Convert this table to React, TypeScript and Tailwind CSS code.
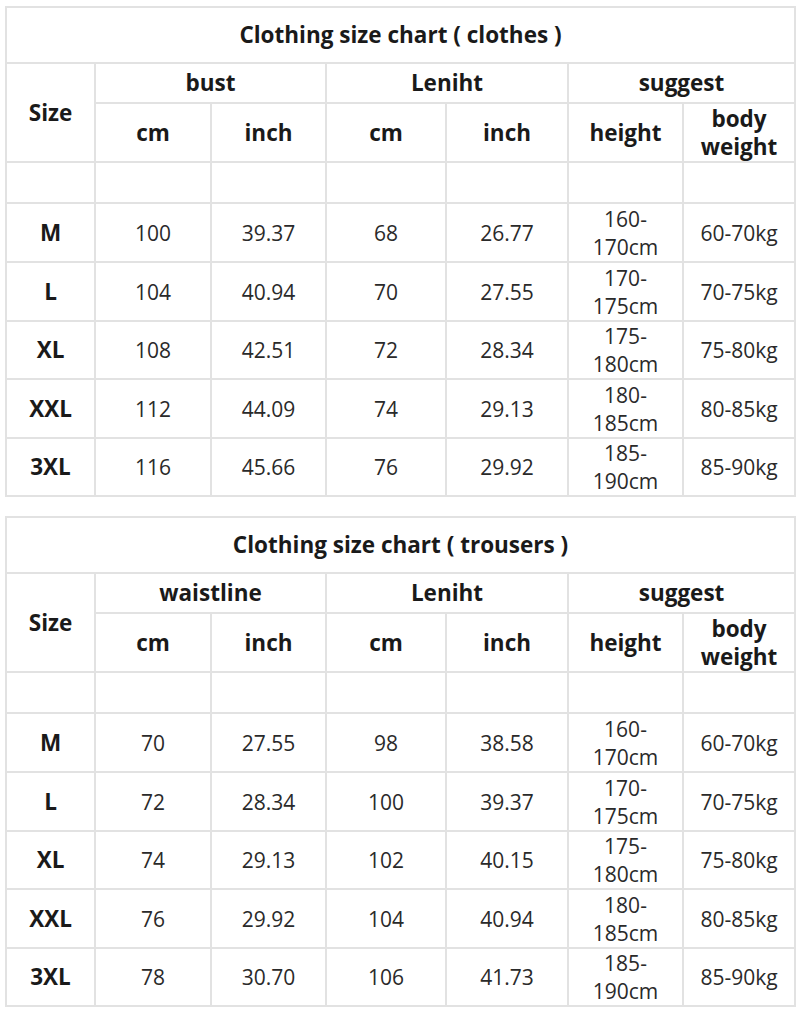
import React from 'react';

type Row = [string, string, string, string, string, string, string];

const clothes: Row[] = [
  ['M', '100', '39.37', '68', '26.77', '160-170cm', '60-70kg'],
  ['L', '104', '40.94', '70', '27.55', '170-175cm', '70-75kg'],
  ['XL', '108', '42.51', '72', '28.34', '175-180cm', '75-80kg'],
  ['XXL', '112', '44.09', '74', '29.13', '180-185cm', '80-85kg'],
  ['3XL', '116', '45.66', '76', '29.92', '185-190cm', '85-90kg'],
];

const trousers: Row[] = [
  ['M', '70', '27.55', '98', '38.58', '160-170cm', '60-70kg'],
  ['L', '72', '28.34', '100', '39.37', '170-175cm', '70-75kg'],
  ['XL', '74', '29.13', '102', '40.15', '175-180cm', '75-80kg'],
  ['XXL', '76', '29.92', '104', '40.94', '180-185cm', '80-85kg'],
  ['3XL', '78', '30.70', '106', '41.73', '185-190cm', '85-90kg'],
];

const rowHeights = ['h-[59px]', 'h-[59px]', 'h-[58px]', 'h-[59px]', 'h-[58px]'];

const cell = 'border-2 border-[#e2e2e2] text-center align-middle p-0';
const bold = 'font-bold text-[#1a1a1a] text-[22.5px]';

const SizeTable = ({ title, first, rows }: { title: string; first: string; rows: Row[] }) => (
  <table className="table-fixed border-collapse w-[789px] text-[21px] leading-[28px] text-[#2a2a2a]">
    <colgroup>
      <col className="w-[89px]" />
      <col className="w-[116px]" />
      <col className="w-[115px]" />
      <col className="w-[120px]" />
      <col className="w-[122px]" />
      <col className="w-[115px]" />
      <col className="w-[112px]" />
    </colgroup>
    <tbody>
      <tr className="h-[56px]">
        <td colSpan={7} className={`${cell} font-bold text-[#1a1a1a] text-[22.5px]`}>{title}</td>
      </tr>
      <tr className="h-[40px]">
        <td rowSpan={2} className={`${cell} ${bold}`}>Size</td>
        <td colSpan={2} className={`${cell} ${bold}`}>{first}</td>
        <td colSpan={2} className={`${cell} ${bold}`}>Leniht</td>
        <td colSpan={2} className={`${cell} ${bold}`}>suggest</td>
      </tr>
      <tr className="h-[59px]">
        <td className={`${cell} ${bold}`}>cm</td>
        <td className={`${cell} ${bold}`}>inch</td>
        <td className={`${cell} ${bold}`}>cm</td>
        <td className={`${cell} ${bold}`}>inch</td>
        <td className={`${cell} ${bold}`}>height</td>
        <td className={`${cell} ${bold}`}>body<br />weight</td>
      </tr>
      <tr className="h-[41px]">
        {Array.from({ length: 7 }).map((_, i) => (
          <td key={i} className={cell}></td>
        ))}
      </tr>
      {rows.map((r, i) => (
        <tr key={r[0]} className={rowHeights[i]}>
          <td className={`${cell} ${bold}`}>{r[0]}</td>
          <td className={cell}>{r[1]}</td>
          <td className={cell}>{r[2]}</td>
          <td className={cell}>{r[3]}</td>
          <td className={cell}>{r[4]}</td>
          <td className={cell}>
            {r[5].split('-')[0]}-<br />{r[5].split('-')[1]}
          </td>
          <td className={cell}>{r[6]}</td>
        </tr>
      ))}
    </tbody>
  </table>
);

export default function App() {
  return (
    <div className="w-[800px] h-[1014px] bg-white pl-[5px] pt-[6px] flex flex-col gap-[19px] font-['Open_Sans',sans-serif]">
      <SizeTable title="Clothing size chart ( clothes )" first="bust" rows={clothes} />
      <SizeTable title="Clothing size chart ( trousers )" first="waistline" rows={trousers} />
    </div>
  );
}
